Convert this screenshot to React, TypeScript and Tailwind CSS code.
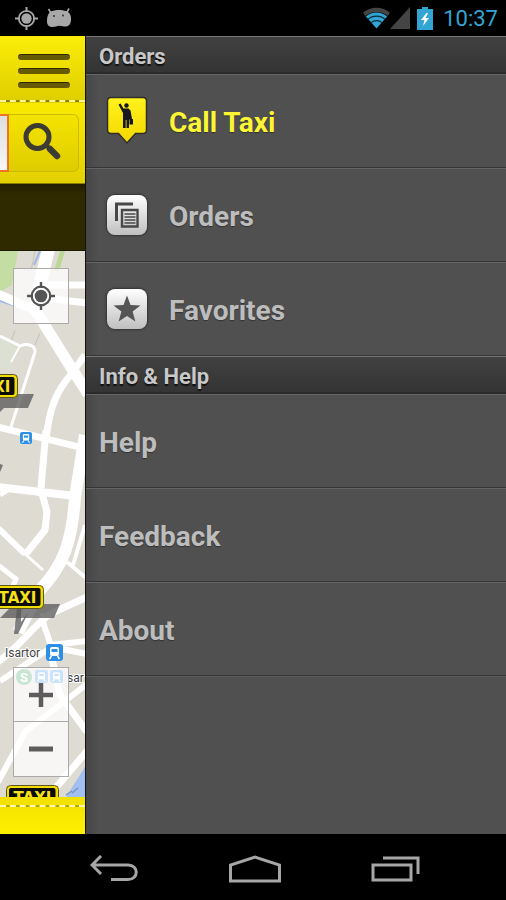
import type { ReactNode } from "react";

function TargetIcon({ className }: { className?: string }) {
  return (
    <svg viewBox="0 0 28 28" className={className} fill="none" stroke="currentColor">
      <circle cx="14" cy="14" r="9.3" strokeWidth="2.2" />
      <circle cx="14" cy="14" r="6.300" fill="currentColor" stroke="none" />
      <path d="M14 0v6M14 22v6M0 14h6M22 14h6" strokeWidth="2.400" />
    </svg>
  );
}

function StatusBar() {
  return (
    <header className="flex h-9 items-center bg-black pl-[15px] pr-2 text-[#33a5d4]">
      <TargetIcon className="h-[23px] w-[23px] text-[#a8a8a8]" />
      <svg viewBox="0 0 26 20" className="ml-2 h-5 w-[26px] text-[#a8a8a8]">
        <path
          d="M6 3C10 1.500 16 1.500 20 3c3.800 1.200 5.200 4.500 5 8.500 0 4.500-2.200 7-5.500 7-2.500 0-3.500-.8-6-.8s-4 1.300-7 1.300c-4 0-5.700-2.500-5.500-6.500C1.200 8 2.500 4.200 6 3z"
          fill="currentColor"
        />
        <path d="M5 5 2.500 1M20.500 5 23 .5" stroke="currentColor" strokeWidth="1.600" />
        <circle cx="8" cy="8" r="1" fill="#333" />
        <circle cx="17" cy="7.500" r="1" fill="#333" />
      </svg>

      <svg viewBox="0 0 28 22" className="ml-auto h-[22px] w-[27px]">
        <path d="M0 5.500C8-1.500 20-1.500 28 5.500L25.500 9C19 3.500 9 3.500 2.500 9z" fill="#444" />
        <path d="M3 9.500C9.500 4 18.500 4 25 9.500L14 22z" fill="currentColor" />
        <path d="M5 12.500c5-4.500 13-4.500 18 0M8 16c3.500-3 8.500-3 12 0" stroke="#0b2b3a" strokeWidth="1.200" fill="none" />
      </svg>
      <svg viewBox="0 0 20 22" className="h-[22px] w-5">
        <path d="M20 0v22H0z" fill="#444" />
      </svg>
      <svg viewBox="0 0 16 23" className="ml-[7px] h-[23px] w-4">
        <path d="M5 0h6v2h5v21H0V2h5z" fill="currentColor" />
        <path d="M9.500 6 4 13h3.500L6 19l6-8H8.500L11 6z" fill="#fff" />
      </svg>
      <span className="ml-2.5 pt-px text-[22px] leading-6">10:37</span>
    </header>
  );
}

function TaxiSign({ x, y }: { x: number; y: number }) {
  return (
    <g transform={`translate(${x} ${y})`}>
      <rect x="0.5" y="0.5" width="52" height="23" rx="4" fill="#f0dc00" stroke="#5d5620" />
      <rect x="3" y="3" width="46.500" height="18" rx="2" fill="#0c0c06" />
      <text
        x="26.500"
        y="17.500"
        fontSize="15"
        fontWeight="700"
        fontFamily="DejaVu Sans, sans-serif"
        textAnchor="middle"
        fill="#f6e21a"
      >
        TAXI
      </text>
    </g>
  );
}

function TrainBadge({ x, y, size }: { x: number; y: number; size: number }) {
  return (
    <svg x={x} y={y} width={size} height={size} viewBox="0 0 17 17">
      <rect width="17" height="17" rx="3" fill="#2e8fe6" />
      <rect x="4" y="3" width="9" height="9" rx="2" fill="#fff" />
      <path d="M5.500 5h6v3h-6z" fill="#2e8fe6" />
      <path d="m5.500 12-2 3M11.500 12l2 3" stroke="#fff" strokeWidth="1.500" />
    </svg>
  );
}

function CityMap() {
  return (
    <svg viewBox="0 251 85 546" preserveAspectRatio="xMinYMin slice" className="block h-full w-full">
      <rect y="251" width="85" height="546" fill="#dedbd3" />
      <path d="M0 251h18l-6 34-12 7z" fill="#c3dda3" />
      <path d="M0 336l19 10-8 24-11-3z" fill="#dce0d2" />
      <path d="M60 251h5l-6 20h-5z" fill="#bcd793" />
      <path d="M0 301l28 9M40 251l-6 14" stroke="#9db9ea" strokeWidth="2" fill="none" />
      <path d="M85 767L66 797h19z" fill="#9fc0f0" />
      <path d="M15 330l-4 12M40 333l-5 12M35 251l-4 20" stroke="#c9c2b8" strokeWidth="1" fill="none" />

      <g stroke="#fff" fill="none" strokeLinejoin="round">
        <path d="M49 247L41 280 34 311" strokeWidth="13" />
        <path d="M-2 294l36 16" strokeWidth="9" />
        <path d="M34 308l38 61 16 25" strokeWidth="11" />
        <path d="M45 285h42M45 298l42 5" strokeWidth="7" />
        <path d="M85 355l-13 18C55 393 49 410 46 440" strokeWidth="7" />
        <path d="M0 336l20 10c8-3 15-1 15 6L11 427" strokeWidth="3" />
        <path d="M11 362l9-16" strokeWidth="2" />
        <path d="M-2 427l89 22M46 430l-5 58" strokeWidth="7" />
        <path d="M-2 487l77 9" strokeWidth="8" />
        <path d="M0 495l8-5" strokeWidth="5" />
        <path d="M41 490l6 22-2 18-20 25" strokeWidth="7" />
        <path d="M-2 528l27 26" strokeWidth="6" />
        <path d="M25 554l18 16" strokeWidth="3" />
        <path d="M-2 565l18 14-6 14" strokeWidth="5" />
        <path d="M85 435l-10 62c-3 46-12 69-35 93L18 632" strokeWidth="12" />
        <path d="M85 525l-12 40M67 562l19 16" strokeWidth="4" />
        <path d="M87 597l-37 17c-20 15-28 30-52 48" strokeWidth="7" />
        <path d="M43 613c-2 14 6 20 7 32l37-4" strokeWidth="6" />
        <path d="M0 681l52-34 35 7" strokeWidth="6" />
        <path d="M50 650l10 45 27 37" strokeWidth="7" />
        <path d="M-2 782l27-50 62-48" strokeWidth="6" />
        <path d="M87 751L48 797" strokeWidth="7" />
      </g>

      {/* sign shadows */}
      <g fill="#555" fillOpacity="0.75">
        <path d="M0 394h34l-6 14H4l-4 4z" />
        <path d="M0 464l3 1-3 7z" />
        <path d="M14 604h46l-6 14H0z" />
        <path d="M17 608h4v14l7-9-10 21h-4z" />
      </g>

      <TaxiSign x={-35} y={374} />
      <TaxiSign x={-9} y={585} />
      <TaxiSign x={6} y={785} />

      <TrainBadge x={20} y={432} size={12} />
      <TrainBadge x={46} y={644} size={17} />
      <TrainBadge x={35} y={670} size={13} />
      <TrainBadge x={50} y={670} size={13} />
      <circle cx="24" cy="677" r="8" fill="#2a9a55" />

      <g fontFamily="Roboto, sans-serif" fill="#444" stroke="#fff" strokeWidth="2" paintOrder="stroke">
        <text x="5" y="657" fontSize="12">Isartor</text>
        <text x="67" y="682" fontSize="12">sar</text>
        <text x="20" y="682" fontSize="13" fontWeight="700" fill="#fff" stroke="none">S</text>
      </g>
      <path d="M66 795l6-4M72 793l6-5" stroke="#7a93bd" strokeWidth="1.500" />
    </svg>
  );
}

function MainPane() {
  return (
    <main className="flex w-[85px] shrink-0 flex-col overflow-hidden bg-[#f7e600]">
      <div className="flex h-[67px] flex-col justify-between bg-linear-to-b from-[#fbed08] to-[#dfcd00] pb-px">
        <button aria-label="Menu" className="ml-[18px] flex flex-col gap-2 pt-[18px]">
          <span className="h-1.5 w-[52px] rounded-full border-t border-[#2e2900] bg-[#665b00]" />
          <span className="h-1.5 w-[52px] rounded-full border-t border-[#2e2900] bg-[#665b00]" />
          <span className="h-1.5 w-[52px] rounded-full border-t border-[#2e2900] bg-[#665b00]" />
        </button>
        <div className="border-t-2 border-dashed border-[#fff79a] bg-[#8f8400]" />
      </div>

      <form className="flex h-[81px] items-center border-b border-[#8a7d00] bg-linear-to-b from-[#faea00] to-[#e4d000] pr-1.5">
        <input
          aria-label="Address"
          className="h-[58px] w-[9px] border-y-2 border-r-2 border-[#ee7420] bg-linear-to-b from-[#dedede] to-[#f8f8f8] outline-none"
        />
        <button
          type="button"
          aria-label="Search"
          className="flex h-[58px] flex-1 items-center justify-center rounded-r-md border border-l-0 border-[#cdbb00] bg-linear-to-b from-[#f5e400] to-[#dfcc00] pr-1 pb-1"
        >
          <svg viewBox="0 0 38 38" className="h-[38px] w-[38px]" fill="none" stroke="#3d3c33">
            <circle cx="14.500" cy="15" r="11.500" strokeWidth="5" />
            <path d="M23.500 24l3 2" strokeWidth="4" />
            <path d="M27 27l7 7" strokeWidth="6.500" strokeLinecap="round" />
          </svg>
        </button>
      </form>

      <div className="h-[67px] border-b border-[#1c1900] bg-linear-to-b from-[#211d00] via-[#302a00] via-15% to-[#302a00]" />

      <section className="relative flex-1">
        <CityMap />
        <button
          aria-label="My location"
          className="absolute right-4 top-[17px] flex h-14 w-14 items-center justify-center border border-[#aaa] bg-white/75 text-[#555]"
        >
          <TargetIcon className="h-7 w-7" />
        </button>
        <div className="absolute bottom-5 right-4 w-14 divide-y divide-[#aaa] border border-[#aaa] bg-white/75">
          <button aria-label="Zoom in" className="flex h-[54px] w-full items-center justify-center">
            <svg viewBox="0 0 24 24" className="h-6 w-6" stroke="#5c5c5c" strokeWidth="4.500">
              <path d="M12 0v24M0 12h24" />
            </svg>
          </button>
          <button aria-label="Zoom out" className="flex h-[54px] w-full items-center justify-center">
            <svg viewBox="0 0 24 24" className="h-6 w-6" stroke="#5c5c5c" strokeWidth="5">
              <path d="M0 12h24" />
            </svg>
          </button>
        </div>
      </section>

      <footer className="h-[37px] bg-linear-to-b from-[#f2e000] to-[#fff000] pt-2">
        <div className="border-t-2 border-dashed border-[#fff9b0] bg-[#b5a700]" />
      </footer>
    </main>
  );
}

function CallTaxiIcon() {
  return (
    <svg viewBox="0 0 42 50" className="h-[50px] w-[42px]">
      <defs>
        <linearGradient id="pin" x1="0" y1="0" x2="0" y2="1">
          <stop offset="0" stopColor="#fff21c" />
          <stop offset="1" stopColor="#f4d800" />
        </linearGradient>
      </defs>
      <path
        d="M5 1.500h32q3.500 0 3.500 3.500v29q0 3.500-3.500 3.500h-7.500L21 47l-8.500-9.500H5Q1.500 37.500 1.500 34V5q0-3.500 3.500-3.500z"
        fill="url(#pin)"
        stroke="#302f2a"
        strokeWidth="1.500"
      />
      <g fill="#171721">
        <circle cx="20.500" cy="9.500" r="2.200" />
        <path d="M12.500 8.500l2-1 3 5h5l2 2 1.500 8.500h1v5.500h-3.500v-4l-.5-2v9.500h-2.500V24h-.8v8h-2.700V17z" />
      </g>
    </svg>
  );
}

function IconTile({ children }: { children: ReactNode }) {
  return (
    <span className="mx-px flex h-10 w-10 items-center justify-center rounded-lg bg-linear-to-b from-white to-[#c0c0c0] shadow-[0_0_2px_1px_#333]">
      {children}
    </span>
  );
}

function OrdersIcon() {
  return (
    <IconTile>
      <svg viewBox="0 0 24 26" className="h-[26px] w-6" fill="none" stroke="#484848">
        <path d="M1.500 19V2H18" strokeWidth="3" />
        <path d="M7 8h15.500v16.500H7z" strokeWidth="2.400" />
        <path d="M9.500 12h11M9.500 15h11M9.500 18h11M9.500 21h11" strokeWidth="1.300" />
      </svg>
    </IconTile>
  );
}

function FavoritesIcon() {
  return (
    <IconTile>
      <svg viewBox="0 0 28 28" className="h-7 w-7">
        <path d="M14 .5l3.500 9.500 10 .4-7.900 6.200 2.800 10L14 20.900 5.600 26.600l2.800-10L.5 10.400l10-.4z" fill="#555" />
      </svg>
    </IconTile>
  );
}

function SectionHeader({ children }: { children: ReactNode }) {
  return (
    <h2 className="flex h-[38px] items-center border-b-2 border-t border-b-[#2a2a2a] border-t-[#777] bg-linear-to-b from-[#414141] to-[#343434] pl-[13px] pt-1 text-[22px] font-bold leading-6 text-[#c8c8c8] text-shadow-[0_2px_1px_#111]">
      {children}
    </h2>
  );
}

const orderItems = [
  { label: "Call Taxi", icon: <CallTaxiIcon />, active: true },
  { label: "Orders", icon: <OrdersIcon /> },
  { label: "Favorites", icon: <FavoritesIcon /> },
];

const infoItems = ["Help", "Feedback", "About"];

const rowClass =
  "flex h-[94px] w-full items-center border-b border-t border-b-[#363636] border-t-[#646464] text-[28px] font-bold leading-8 text-shadow-[0_1px_1px_#333]";

function Drawer() {
  return (
    <nav className="flex-1 border-l border-[#111] bg-[#505050] bg-linear-to-r from-[#464646] to-[#505050] to-[12px]">
      <SectionHeader>Orders</SectionHeader>
      {orderItems.map((item) => (
        <button
          key={item.label}
          className={`${rowClass} gap-[21px] pl-5 ${item.active ? "text-[#fcf534]" : "text-[#bdbdbd]"}`}
        >
          {item.icon}
          <span className="pt-1">{item.label}</span>
        </button>
      ))}
      <SectionHeader>Info &amp; Help</SectionHeader>
      {infoItems.map((label) => (
        <button key={label} className={`${rowClass} pl-[13px] text-[#bdbdbd]`}>
          <span className="pt-1">{label}</span>
        </button>
      ))}
      <div className="border-t border-[#5c5c5c]" />
    </nav>
  );
}

function SystemNav() {
  return (
    <footer className="grid h-[66px] grid-cols-3 items-center bg-black pl-11 pr-10 pt-1 text-[#a6a6a6]">
      <button aria-label="Back" className="flex justify-center">
        <svg viewBox="0 0 48 28" className="h-7 w-12" fill="none" stroke="currentColor" strokeWidth="3">
          <path d="M11 1L2 10l9 9M2 10h36c11 0 11 14.500 0 14.500H21" />
        </svg>
      </button>
      <button aria-label="Home" className="flex justify-center">
        <svg viewBox="0 0 54 28" className="h-7 w-[54px]" fill="none" stroke="currentColor" strokeWidth="3">
          <path d="M2.500 26V10L27 2l24.500 8v16z" />
        </svg>
      </button>
      <button aria-label="Recent apps" className="flex justify-center">
        <svg viewBox="0 0 50 28" className="h-7 w-[50px]" fill="none" stroke="currentColor" strokeWidth="3">
          <path d="M2 10h38v15H2zM12 3h35v16" />
        </svg>
      </button>
    </footer>
  );
}

export default function App() {
  return (
    <div className="flex min-h-screen flex-col bg-black font-[Roboto,sans-serif]">
      <StatusBar />
      <div className="flex flex-1">
        <MainPane />
        <Drawer />
      </div>
      <SystemNav />
    </div>
  );
}
